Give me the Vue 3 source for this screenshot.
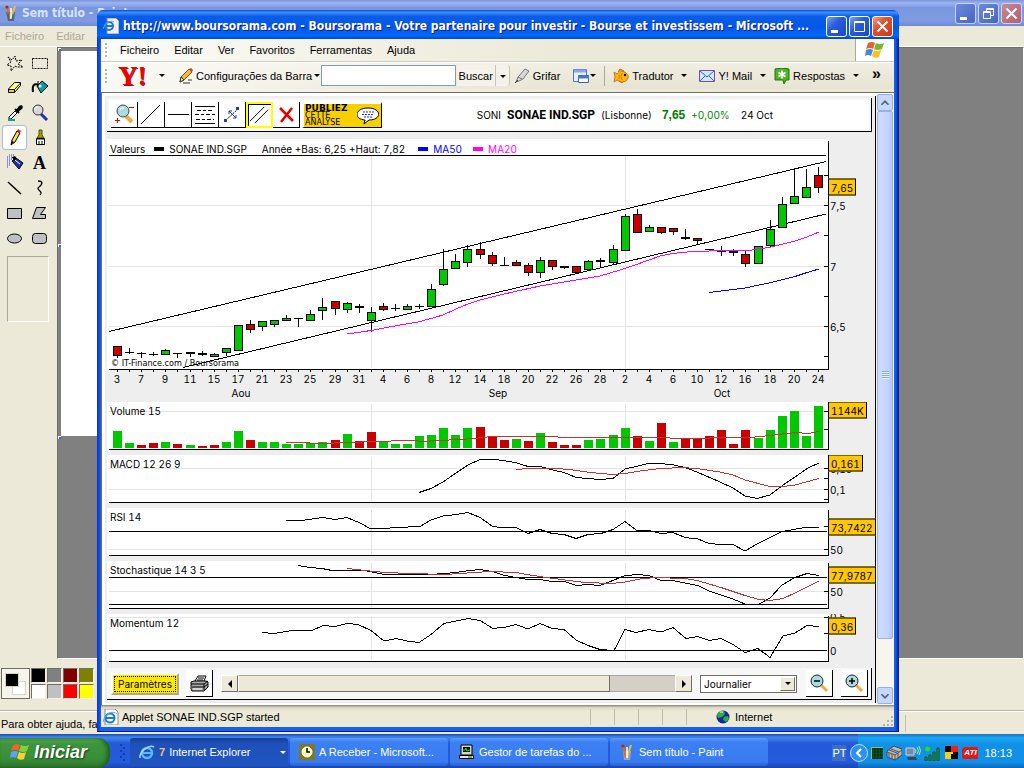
<script setup>
const firstX = 117
const step = 12.086
const plotLeft = 107
const plotWidth = 722
const xAt = (i) => Math.round(firstX + step * i)
const pct = (x) => ((x - plotLeft) / plotWidth) * 100 + '%'

const G = '#00c800'
const R = '#c80000'
const K = '#000000'

// high, body top, body bottom, low, colour
const candles = [
  [346, 346, 355, 357, R], [348, 352, 352, 353, K], [352, 353, 353, 357, K], [352, 354, 354, 355, K],
  [349, 350, 354, 354, G], [353, 353, 353, 357, K], [352, 352, 353, 356, K], [351, 353, 354, 355, K],
  [353, 354, 356, 356, G], [348, 348, 352, 355, G], [325, 325, 350, 350, G], [320, 324, 329, 332, R],
  [321, 321, 326, 330, G], [320, 320, 324, 326, G], [315, 318, 320, 320, G], [318, 318, 318, 326, K],
  [310, 314, 320, 320, G], [298, 307, 310, 319, G], [301, 301, 308, 314, R], [302, 303, 309, 312, G],
  [304, 306, 307, 312, K], [307, 312, 320, 331, G], [303, 306, 309, 310, R], [304, 308, 308, 310, K],
  [304, 306, 309, 309, G], [304, 306, 306, 308, K], [284, 289, 306, 306, G], [249, 269, 284, 285, G],
  [254, 261, 268, 268, G], [245, 249, 262, 266, G], [242, 249, 254, 258, R], [252, 255, 263, 265, R],
  [257, 265, 265, 265, K], [260, 262, 265, 265, R], [263, 265, 272, 275, R], [257, 260, 272, 277, G],
  [260, 260, 266, 269, R], [266, 266, 267, 268, K], [266, 266, 272, 272, R], [260, 261, 269, 269, G],
  [258, 260, 261, 266, K], [245, 249, 262, 264, G], [214, 216, 250, 250, G], [209, 214, 232, 232, R],
  [225, 227, 231, 231, G], [227, 227, 232, 233, R], [228, 228, 231, 234, R], [229, 237, 238, 239, K],
  [238, 238, 240, 244, R], [249, 249, 249, 249, K], [246, 250, 251, 255, K], [249, 251, 252, 255, K],
  [251, 254, 263, 266, R], [246, 246, 263, 263, G], [220, 229, 245, 246, G], [197, 204, 227, 227, G],
  [169, 196, 203, 203, G], [169, 187, 197, 197, G], [167, 175, 187, 192, R],
].map(([high, top, bottom, low, color], i) => ({ x: xAt(i), high, top, bottom, low, color }))

const volumeTops = [
  431, 443, 445, 443, 442, 444, 445, 446, 445, 442, 431, 440, 442, 442, 444, 444, 443, 442, 440, 434,
  441, 432, 441, 444, 444, 436, 435, 428, 435, 428, 427, 436, 440, 439, 441, 433, 442, 445, 445, 440,
  439, 435, 428, 436, 441, 423, 442, 438, 438, 436, 430, 444, 430, 438, 430, 416, 411, 436, 406,
]
const redVolumes = new Set([2, 3, 5, 7, 8, 11, 18, 20, 21, 30, 31, 32, 34, 36, 37, 38, 43, 45, 47, 48, 49, 50, 51, 52])
const volumes = volumeTops.map((y, i) => ({ x: xAt(i), y, color: redVolumes.has(i) ? R : G }))

const ma20 = '347,334 371,330.5 400,325 418,322 431,318.5 443,315 456,309 468,304 480,300 504,294 540,286 600,276 625,268.5 649,260 660,256 672,253.5 692,251.5 720,250.7 750,250.3 771,247 783,244 795,241 807,237 819,232'
const ma50 = '709,292.5 745,288 771,282.5 795,276.5 807,272.5 819,269'

const dates = [3, 7, 9, 11, 15, 17, 21, 23, 25, 29, 31, 4, 6, 8, 12, 14, 18, 20, 22, 26, 28, 2, 4, 6, 10, 12, 16, 18, 20, 24]
const months = [{ name: 'Aou', x: 241 }, { name: 'Sep', x: 498 }, { name: 'Oct', x: 722 }]

const panels = [
  {
    title: 'Volume 15', top: 402, grid: [411], solid: [], ticks: [411, 429],
    lines: [{ c: '#c83232', p: '286,442.5 304,442.5 316,443.5 353,442.5 371,441.5 412,440.5 424,441.5 437,440.5 461,439.5 484,437.5 490,436.5 556,436.5 560,437.5 640,437.5 700,438.5 720,437.5 750,437.5 770,435.5 795,432.5 808,433.5 819,431.5' }],
    labels: [], badge: '1144K', badgeY: 410,
  },
  {
    title: 'MACD 12 26 9', top: 455, grid: [468, 489], solid: [], ticks: [468, 478, 489, 499],
    lines: [
      { c: '#000', p: '419,492.5 431,488.5 443,482 456,473 468,465 480,459.5 495,459.5 506,461 517,463 528,466.5 540,466.5 553,470 564,472.5 576,477.5 588,478.5 600,479.5 613,478.5 625,469 638,466 648,463.5 660,463.5 674,465 685,467.5 697,472 720,482 733,488 745,496 757,498.5 770,495 783,485 795,477 808,468 819,463' },
      { c: '#c83232', p: '516,469.5 528,468.5 555,468.5 570,469.5 590,472.5 613,474.5 625,473.5 640,471 660,468.5 684,467.5 700,469 720,472 733,475 745,480 770,486.5 783,486.5 795,485 819,478.5' },
    ],
    labels: [{ t: '0,15', y: 469 }, { t: '0,1', y: 490 }], badge: '0,161', badgeY: 463,
  },
  {
    title: 'RSI 14', top: 508, grid: [549], solid: [531], ticks: [526, 549],
    lines: [{ c: '#000', p: '286,520.5 302,520.5 315,518.5 323,517.5 335,519.5 347,517.5 360,523 371,529 384,528.5 396,527.5 420,526.5 431,520 443,516 456,514.5 468,512.5 480,517.5 492,526 500,527.5 516,527.5 528,533.5 540,529.5 552,533.5 564,534.5 576,538.5 588,534.5 601,533.5 613,529.5 625,521.5 636,530 649,530.5 661,533.5 673,532.5 685,537.5 698,539 709,543.5 720,544.5 733,544.5 745,551 758,543.5 782,531.5 805,527.5 819,527.5' }],
    labels: [{ t: '50', y: 550 }], badge: '73,7422', badgeY: 527,
  },
  {
    title: 'Stochastique 14 3 5', top: 561, grid: [591], solid: [577, 604], ticks: [591],
    lines: [
      { c: '#000', p: '298,565.5 310,567.5 322,568.5 332,570.5 365,570.5 372,572 385,574.5 430,574.5 445,573.5 455,572.5 470,570.5 480,569.5 492,571.5 503,575 516,577.5 528,579.5 540,579.5 552,581.5 564,581.5 577,585.5 587,584.5 600,585.5 614,580 625,575.5 640,574.5 650,576 661,580.5 673,580.5 685,583 698,585.5 709,591 721,595 733,599 745,604 759,604 770,598 782,585 795,577.5 807,573.5 819,575.5' },
      { c: '#c83232', p: '347,568.5 365,570.5 385,572.5 410,573.5 445,574.5 460,573.5 475,572.5 490,571.5 516,572.5 530,575 550,578 565,580 585,582.5 612,583.5 625,582 640,579 655,577.5 685,578.5 697,580.5 721,587.5 745,595.5 759,599.5 770,600.5 783,598.5 795,593 819,581' },
    ],
    labels: [{ t: '50', y: 592 }], badge: '77,9787', badgeY: 575,
  },
  {
    title: 'Momentum 12', top: 614, grid: [617], solid: [650], ticks: [617, 633],
    lines: [{ c: '#000', p: '262,632.5 274,633.5 292,630.5 312,630.5 323,625.5 335,626.5 347,623.5 358,624.5 371,630.5 384,641 396,638.5 407,641 419,642.5 431,634.5 444,623.5 456,621 468,618.5 480,620.5 493,628.5 506,627 516,624.5 528,629 540,623.5 552,628.5 564,629.5 576,640 588,645.5 600,649.5 614,650.5 625,629.5 636,632.5 649,629.5 661,632 673,627.5 686,638.5 698,636.5 709,640.5 721,638.5 733,644.5 745,652.5 758,648.5 770,657.5 783,636 795,633 807,625.5 819,626.5' }],
    labels: [{ t: '0,5', y: 617 }, { t: '0', y: 651 }], badge: '0,36', badgeY: 626,
  },
]

const mainLabels = [{ t: '7,5', y: 206 }, { t: '7', y: 267 }, { t: '6,5', y: 327 }]
const mainTicks = [175, 205, 235, 266, 296, 326, 356]
const inMain = (y) => ((y - 139) / 231) * 100 + '%'
const inPanel = (y, top) => ((y - top) / 48) * 100 + '%'

const swatches = ['#000', '#808080', '#800000', '#808000', '#fff', '#c0c0c0', '#f00', '#ff0']
const menus = ['Ficheiro', 'Editar', 'Ver', 'Favoritos', 'Ferramentas', 'Ajuda']
</script>

<template>
  <div class="desktop">
    <section class="paint">
      <header class="paint-title">
        <svg class="i16" viewBox="0 0 16 16"><path d="M3 7h9l-1 9H5z" fill="#4a6aa0"/><path d="M4 2l3 12" stroke="#e86a10" stroke-width="2"/><path d="M12 1L8 13" stroke="#f0c030" stroke-width="2"/><path d="M8 3v11" stroke="#fff" stroke-width="1.5"/><path d="M5 8l1 7M10 9l-1 6" stroke="#208040"/><circle cx="4" cy="2" r="1.6" fill="#c02010"/></svg>
        <span>Sem título - Paint</span>
        <div class="win-btns dim">
          <button aria-label="Minimizar"><svg viewBox="0 0 19 19"><path d="M4 13h7v3H4z" fill="#fff"/></svg></button>
          <button aria-label="Restaurar"><svg viewBox="0 0 19 19"><path d="M7.500 7V4.500h7v7H12M4.500 7.500h7v7h-7z M4 8.500h8M7 5.500h8" fill="none" stroke="#fff"/></svg></button>
          <button class="x" aria-label="Fechar"><svg viewBox="0 0 19 19"><path d="M4.500 4.500l10 10M14.500 4.500l-10 10" stroke="#fff" stroke-width="2"/></svg></button>
        </div>
      </header>
      <nav class="paint-menu"><button>Ficheiro</button><button>Editar</button><button>Ver</button></nav>
      <div class="paint-body">
        <aside class="toolbox">
          <div class="tools">
            <button aria-label="Seleção livre"><svg viewBox="0 0 18 18"><path d="M2 3l4 3 3-4 1 5 6-1-4 4 5 3-6 0-2-1-4 5 0-5-4-1 4-3z" fill="none" stroke="#000" stroke-dasharray="2 1"/></svg></button>
            <button aria-label="Selecionar"><svg viewBox="0 0 18 18"><path d="M1.500 4.500h15v10h-15z" fill="none" stroke="#000" stroke-dasharray="2 1"/></svg></button>
            <button aria-label="Borracha"><svg viewBox="0 0 18 18"><path d="M2.500 10l6-6.500h6v3l-6 7h-6z" fill="#ffff90" stroke="#000"/><path d="M3 10.500h5.500l6-6.500M8.500 10.500v3" fill="none" stroke="#000"/><path d="M3 11h5v2H3z" fill="#e8d800"/></svg></button>
            <button aria-label="Preencher"><svg viewBox="0 0 18 18"><path d="M6 7l5-5 6 5-7 7z" fill="#00a0a8" stroke="#000"/><path d="M2 13c-1-7 1-9 6-7" stroke="#000" stroke-width="2" fill="none"/><path d="M7 2v6" stroke="#000"/><circle cx="9" cy="7" r="1.500" fill="#fff"/></svg></button>
            <button aria-label="Selecionar cor"><svg viewBox="0 0 18 18"><path d="M10 6l3-4c3-2 5 1 3 3l-4 3z"/><path d="M9 5l4 4" stroke="#000" stroke-width="2"/><path d="M9 7l-6 6v2h2l6-6z" fill="#fff" stroke="#000"/><path d="M2 16h7" stroke="#00a8a8" stroke-width="2"/></svg></button>
            <button aria-label="Lupa"><svg viewBox="0 0 18 18"><path d="M10 10l6 6" stroke="#2030c0" stroke-width="3"/><circle cx="7" cy="6" r="5" fill="#d8d8d8" stroke="#333"/><path d="M4 6c0-2 1-3 3-3" stroke="#fff" fill="none"/></svg></button>
            <button class="on" aria-label="Lápis"><svg viewBox="0 0 18 18"><path d="M5 16l1-5 5-9 3 2-5 9z" fill="#f4dc50" stroke="#000"/><path d="M11 2l3 2 1-2-3-2z" fill="#e02020"/><path d="M5 16l1-4 2 1z"/></svg></button>
            <button aria-label="Pincel"><svg viewBox="0 0 18 18"><path d="M8 1h3v5l2 3H6l2-3z" fill="#a0a000" stroke="#505000"/><path d="M5.500 9.500h8v6h-8z" fill="#fff" stroke="#000"/><path d="M8 12v4M11 12v4M6 10h7" stroke="#000"/></svg></button>
            <button aria-label="Spray"><svg viewBox="0 0 18 18"><path d="M3 1h5M1 3h6M1 5h5M1 7h4M1 9h3M1 11h3M1 13h2" stroke="#3030e0" stroke-dasharray="1 1"/><path d="M6 7l4-3 7 5-4 6z" fill="#2030b0" stroke="#000"/><path d="M6 3l3-1 2 3-3 2z"/><path d="M9 6l5 4" stroke="#fff"/></svg></button>
            <button class="a-tool" aria-label="Texto">A</button>
            <button aria-label="Linha"><svg viewBox="0 0 18 18"><path d="M2 3l13 12" stroke="#000" stroke-width="1.500"/></svg></button>
            <button aria-label="Curva"><svg viewBox="0 0 18 18"><path d="M7 2c5 0 5 3 1 6s5 4 1 8" fill="none" stroke="#000" stroke-width="1.300"/></svg></button>
            <button aria-label="Retângulo"><svg viewBox="0 0 18 18"><path d="M1.500 4.500h14v10h-14z" fill="#c0c0c0" stroke="#000"/></svg></button>
            <button aria-label="Polígono"><svg viewBox="0 0 18 18"><path d="M5.500 3.500h9l-5 7h5v4h-13z" fill="#c0c0c0" stroke="#000"/></svg></button>
            <button aria-label="Elipse"><svg viewBox="0 0 18 18"><ellipse cx="8.500" cy="9.500" rx="7" ry="4.500" fill="#c0c0c0" stroke="#000"/></svg></button>
            <button aria-label="Retângulo arredondado"><svg viewBox="0 0 18 18"><rect x="1.500" y="4.500" width="14" height="10" rx="3" fill="#c0c0c0" stroke="#000"/></svg></button>
          </div>
          <div class="tool-options"></div>
        </aside>
        <div class="canvas-area"><div class="canvas"><i></i><i></i><i></i></div></div>
      </div>
      <div class="palette">
        <div class="current"><i></i><b></b></div>
        <div class="swatches"><button v-for="c in swatches" :key="c" :style="{ background: c }" aria-label="Cor"></button></div>
      </div>
      <footer class="paint-status"><span>Para obter ajuda, faça clique</span><i></i></footer>
    </section>

    <main class="ie">
      <header class="ie-title">
        <svg class="i16" viewBox="0 0 16 16"><path d="M4 0h9l3 3v13H4z" fill="#f4f0e0" stroke="#888"/><circle cx="6" cy="8" r="4" fill="none" stroke="#1878d8" stroke-width="2"/><path d="M2 8h8" stroke="#1878d8" stroke-width="2"/><path d="M0 11C2 4 8 2 11 4" fill="none" stroke="#50b0f0"/></svg>
        <span>http://www.boursorama.com - Boursorama - Votre partenaire pour investir - Bourse et investissem - Microsoft ...</span>
        <div class="win-btns">
          <button aria-label="Minimizar"><svg viewBox="0 0 19 19"><path d="M4 13h7v3H4z" fill="#fff"/></svg></button>
          <button aria-label="Maximizar"><svg viewBox="0 0 19 19"><path d="M4.500 4.500h10v10h-10zM4 5.500h11" fill="none" stroke="#fff"/></svg></button>
          <button class="x" aria-label="Fechar"><svg viewBox="0 0 19 19"><path d="M4.500 4.500l10 10M14.500 4.500l-10 10" stroke="#fff" stroke-width="2"/></svg></button>
        </div>
      </header>

      <nav class="ie-menu">
        <i class="grip"></i>
        <button v-for="m in menus" :key="m">{{ m }}</button>
        <span class="flag"><svg width="20" height="18" viewBox="0 0 20 18"><path d="M3 2q4-2 7 0l-2 6q-3-2-7 0z" fill="#e8602c"/><path d="M11 2q4 2 8 0l-2 6q-4 2-8 0z" fill="#78b830"/><path d="M1 9q4-2 7 0l-2 6q-3-2-6 0z" fill="#4888d8"/><path d="M9 9q4 2 7 0l-2 7q-4 2-7-1z" fill="#f8c020"/></svg></span>
      </nav>

      <div class="ie-tools">
        <i class="grip"></i>
        <button class="yahoo">Y!</button><i class="caret y-caret"></i>
        <button class="tb cfg"><svg class="i16" viewBox="0 0 16 16"><path d="M2 14l1-5 8-8 3 3-8 8z" fill="#f8b830" stroke="#805010"/><path d="M11 1l3 3 1-2-2-2z" fill="#e04030"/><path d="M3 9l3 3-4 2z" fill="#f8e0b0" stroke="#333"/><path d="M5 15h7M10 12h4" stroke="#333"/></svg>Configurações da Barra<i class="caret"></i></button>
        <input class="search" type="text" aria-label="Buscar">
        <button class="buscar">Buscar</button><button class="buscar drop" aria-label="Opções"><i class="caret"></i></button>
        <button class="tb grifar"><svg class="i16" viewBox="0 0 16 16"><path d="M2 14l2-5 7-8 4 2-6 8-4 2z" fill="#d8d8d8" stroke="#777"/><path d="M4 9l4 2" stroke="#777"/><path d="M1 15l3-3" stroke="#333"/></svg>Grifar</button>
        <button class="tb wins" aria-label="Janelas"><svg class="i16" viewBox="0 0 16 16"><path d="M.5 1.500h13v12H.5z" fill="#e8f0ff" stroke="#4878c8"/><path d="M1 3h12" stroke="#88a8e8" stroke-width="3"/><path d="M5.500 7.500h10v7h-10z" fill="#fff" stroke="#3868b8"/><path d="M5 9h11" stroke="#4878c8" stroke-width="3"/></svg><i class="caret"></i></button>
        <i class="rule"></i>
        <button class="tb trad"><svg class="i16" viewBox="0 0 16 16"><path d="M1 4l3 2q5-5 9-1 4 3 1 7-4 4-10 0l-3 2 1-5z" fill="#f8b818" stroke="#d07808"/><path d="M5 4l2-3 4 2M6 13l3 2 2-2" fill="#f89818" stroke="#c87008"/><path d="M9 5q-2 4 0 7M6 7v4" stroke="#d87808" fill="none"/><circle cx="12" cy="7" r="1.200"/></svg>Tradutor<i class="caret far"></i></button>
        <button class="tb mail"><svg class="i16" viewBox="0 0 16 16"><path d="M.5 2.500h15v11H.5z" fill="#d0e8ff" stroke="#7050a8"/><path d="M1 3l7 6 7-6M1 13l5-5M15 13l-5-5" fill="none" stroke="#3868b8"/></svg>Y! Mail<i class="caret far"></i></button>
        <button class="tb resp"><svg class="i16" viewBox="0 0 16 16"><path d="M1 1q7-2 14 0v11h-3l-2 4-1-4H1z" fill="#48b820" stroke="#287010"/><path d="M8 2.500v8M4.500 4.500l7 4M11.500 4.500l-7 4" stroke="#fff" stroke-width="2"/></svg>Respostas<i class="caret far"></i></button>
        <b class="more">»</b>
      </div>

      <div class="page">
        <div class="applet">
          <div class="frame top-frame">
            <div class="chart-tools">
              <button aria-label="Zoom"><svg viewBox="0 0 26 25"><path d="M15 14l6 6" stroke="#f8a840" stroke-width="4"/><circle cx="12" cy="9" r="6" fill="#a8dce0" stroke="#444"/><path d="M9 8q1-3 4-2" stroke="#fff" fill="none"/><path d="M18 5.500h5M4 18.500h5M6.500 16v5" stroke="#e00000"/></svg></button>
              <button aria-label="Segmento"><svg viewBox="0 0 26 25"><path d="M3 22L22 3" stroke="#000"/></svg></button>
              <button aria-label="Horizontal"><svg viewBox="0 0 26 25"><path d="M3 12.500h21" stroke="#000"/></svg></button>
              <button aria-label="Fibonacci"><svg viewBox="0 0 26 25"><path d="M3 4.500h20M3 21.500h20" stroke="#000"/><path d="M5 8.500h16M3 12.500h20M4 17.500h18" stroke="#000" stroke-dasharray="4 2 3 2"/></svg></button>
              <button aria-label="Deslocar"><svg viewBox="0 0 26 25"><path d="M7 18L19 7" stroke="#000" stroke-dasharray="2 1"/><path d="M10 9l7 7M10 9h3M10 9v3M17 16h-3M17 16v-3" fill="none" stroke="#1838d0"/><path d="M5 17h3v3H5zM17 5h3v3h-3z" fill="#1838d0"/></svg></button>
              <button class="sel" aria-label="Canal"><svg viewBox="0 0 26 25"><path d="M3 19L18 4M8 21L22 7" stroke="#000"/></svg></button>
              <button aria-label="Apagar"><svg viewBox="0 0 26 25"><path d="M7 6l13 13M19 6L8 20" stroke="#e00000" stroke-width="2.500"/></svg></button>
              <button class="publish"><span><b>PUBLIEZ</b><br>CETTE<br>ANALYSE</span><svg viewBox="0 0 22 18"><path d="M11 1c14 0 14 12 1 12l-5 4 1-4c-12-1-10-12 3-12z" fill="#fff" stroke="#000"/><path d="M6 5h11M5 7.500h12M7 10h9" stroke="#2828d0" stroke-dasharray="2 1"/></svg></button>
            </div>
            <p class="quote"><span>SONI</span><b class="name">SONAE IND.SGP</b><span>(Lisbonne)</span><b class="price">7,65</b><span class="chg">+0,00%</span><span class="day">24 Oct</span></p>
          </div>

          <div class="row main-row">
            <div class="plot">
              <svg viewBox="107 139 722 231" preserveAspectRatio="none" shape-rendering="crispEdges">
                <path d="M109 205.500h715M109 266.500h715M109 326.500h715M371.500 156v212M625.500 156v212" stroke="#e4e4e4"/>
                <polyline points="109,331.500 826,161.500" class="ln"/><polyline points="183,367.500 826,214" class="ln"/>
                <g v-for="(c, i) in candles" :key="i">
                  <rect :x="c.x" :y="c.high" width="1" :height="c.low - c.high + 1"/>
                  <rect :x="c.x - 4" :y="c.top" width="9" :height="c.bottom - c.top + 1"/>
                  <rect v-if="c.color !== K" :x="c.x - 3" :y="c.top + 1" width="7" :height="c.bottom - c.top - 1" :fill="c.color"/>
                </g>
                <polyline :points="ma20" fill="none" stroke="#f0f"/><polyline :points="ma50" fill="none" stroke="#00f"/>
                <path d="M109 155.500h717M109 369.500h720M828.500 141v229" stroke="#000"/>
                <path v-for="y in mainTicks" :key="y" :d="`M824 ${y + 0.5}h4`" stroke="#000"/>
              </svg>
              <div class="legend"><span class="lg-title">Valeurs</span><i class="k"></i><span class="lg-name">SONAE IND.SGP</span><span class="lg-year">Année +Bas: 6,25 +Haut: 7,82</span><i class="b"></i><span class="blue">MA50</span><i class="m"></i><span class="mag">MA20</span></div>
              <div class="copyright">© IT-Finance.com / Boursorama</div>
            </div>
            <div class="axis">
              <span v-for="l in mainLabels" :key="l.t" :style="{ top: inMain(l.y) }">{{ l.t }}</span>
              <b :style="{ top: inMain(187) }">7,65</b>
            </div>
          </div>

          <div class="dates">
            <div class="dates-in">
              <i v-for="(c, i) in candles" :key="'t' + i" :style="{ left: pct(c.x) }"></i>
              <span v-for="(d, i) in dates" :key="'d' + i" :style="{ left: pct(xAt(i * 2)) }">{{ d }}</span>
              <span v-for="m in months" :key="m.name" class="month" :style="{ left: pct(m.x) }">{{ m.name }}</span>
            </div>
          </div>

          <div class="indicators">
            <div v-for="(p, n) in panels" :key="p.title" class="row">
              <div class="plot">
                <svg :viewBox="`107 ${p.top} 722 48`" preserveAspectRatio="none" shape-rendering="crispEdges">
                  <path v-for="y in p.grid" :key="y" :d="`M109 ${y + 0.5}h715`" stroke="#e4e4e4"/>
                  <path :d="`M371.500 ${p.top + 2}v44M625.500 ${p.top + 2}v44`" stroke="#e4e4e4"/>
                  <path v-for="y in p.solid" :key="y" :d="`M109 ${y + 0.5}h718`" stroke="#000"/>
                  <g v-if="n === 0"><rect v-for="(v, i) in volumes" :key="i" :x="v.x - 4" :y="v.y" width="9" :height="448 - v.y" :fill="v.color"/></g>
                  <polyline v-for="l in p.lines" :key="l.p" :points="l.p" fill="none" :stroke="l.c"/>
                  <path v-for="y in p.ticks" :key="y" :d="`M824 ${y + 0.5}h4`" stroke="#000"/>
                  <path :d="`M109 ${p.top + 47.5}h720M828.500 ${p.top + 2}v46`" stroke="#000"/>
                </svg>
                <h2>{{ p.title }}</h2>
              </div>
              <div class="axis clip">
                <span v-for="l in p.labels" :key="l.t" :style="{ top: inPanel(l.y, p.top) }">{{ l.t }}</span>
                <b :style="{ top: inPanel(p.badgeY, p.top) }">{{ p.badge }}</b>
              </div>
            </div>
          </div>

          <div class="frame bottom-frame">
            <button class="params">Paramètres</button>
            <button class="sq" aria-label="Imprimir"><svg viewBox="0 0 26 26"><path d="M9 11l3-5h8l-2 5" fill="#fff" stroke="#000"/><path d="M12 8h6M11 10h6" stroke="#000"/><path d="M5 12l3-1h12l2 1v5l-4 4H6l-1-2z" fill="#a8a8a8" stroke="#000"/><path d="M5 14h13l4-3M6 17h12l4-3M18 14v6" fill="none" stroke="#000"/><path d="M7 19h9" stroke="#fff"/></svg></button>
            <div class="hbar"><button aria-label="Anterior"><svg viewBox="0 0 8 8"><path d="M6 0v8L2 4z"/></svg></button><div class="thumb"></div><div class="track"></div><button aria-label="Seguinte"><svg viewBox="0 0 8 8"><path d="M2 0v8l4-4z"/></svg></button></div>
            <div class="picker"><select aria-label="Período"><option>Journalier</option></select><i><em class="caret"></em></i></div>
            <button class="sq" aria-label="Reduzir"><svg viewBox="0 0 26 26"><path d="M14 14l7 7" stroke="#f8a840" stroke-width="3"/><circle cx="11" cy="11" r="6" fill="#a8dce0" stroke="#222"/><path d="M8 11h6" stroke="#000" stroke-width="1.500"/></svg></button>
            <button class="sq" aria-label="Ampliar"><svg viewBox="0 0 26 26"><path d="M14 14l7 7" stroke="#f8a840" stroke-width="3"/><circle cx="11" cy="11" r="6" fill="#a8dce0" stroke="#222"/><path d="M8 11h6M11 8v6" stroke="#000" stroke-width="1.500"/></svg></button>
          </div>
        </div>
        <div class="vbar">
          <button aria-label="Subir"><svg viewBox="0 0 16 16"><path d="M4 10l4-4 4 4" fill="none" stroke="#4d6185" stroke-width="2"/></svg></button>
          <div class="vthumb"><i></i></div>
          <div class="vtrack"></div>
          <button aria-label="Descer"><svg viewBox="0 0 16 16"><path d="M4 6l4 4 4-4" fill="none" stroke="#4d6185" stroke-width="2"/></svg></button>
        </div>
      </div>

      <footer class="ie-status">
        <svg class="i16" viewBox="0 0 16 16"><path d="M2 0h10l3 3v13H2z" fill="#fff" stroke="#888"/><circle cx="7" cy="9" r="4.500" fill="none" stroke="#1878d8" stroke-width="2"/><path d="M3 9h9" stroke="#1878d8" stroke-width="2"/><path d="M0 13C2 4 10 1 14 5" fill="none" stroke="#50b0f0"/></svg>
        <span class="msg">Applet SONAE IND.SGP started</span>
        <i></i><i></i><i></i><i></i><i></i>
        <div class="zone"><svg viewBox="0 0 14 14"><circle cx="7" cy="7" r="6.500" fill="#1028a8"/><path d="M3 2l5-1 1 3-3 3-4 1-1-3zM8 7l4-1 1 3-3 3-3-2z" fill="#30b030"/><path d="M4 2l3 0" stroke="#fff"/></svg>Internet</div>
        <svg class="resize" viewBox="0 0 12 12"><path d="M9 1h2v2H9zM5 5h2v2H5zM9 5h2v2H9zM1 9h2v2H1zM5 9h2v2H5zM9 9h2v2H9z" fill="#b8b4a0"/></svg>
      </footer>
    </main>

    <footer class="taskbar">
      <button class="start"><svg viewBox="0 0 20 18"><path d="M3 2q4-2 7 0l-2 6q-3-2-7 0z" fill="#f06030"/><path d="M11 2q4 2 8 0l-2 6q-4 2-8 0z" fill="#80d040"/><path d="M1 9q4-2 7 0l-2 6q-3-2-6 0z" fill="#60a0f8"/><path d="M9 9q4 2 7 0l-2 7q-4 2-7-1z" fill="#f8d030"/></svg>Iniciar</button>
      <svg class="dots" viewBox="0 0 8 20"><path d="M1 1h2v2H1zM4 4h2v2H4zM1 7h2v2H1zM4 10h2v2H4zM1 13h2v2H1zM4 16h2v2H4z" fill="#123ea8"/></svg>
      <div class="tasks">
        <button class="down"><svg viewBox="0 0 16 16"><circle cx="8" cy="9" r="5" fill="none" stroke="#58b8f8" stroke-width="2.500"/><path d="M3 9h10" stroke="#58b8f8" stroke-width="2"/><path d="M1 14C0 8 10 0 15 3" fill="none" stroke="#a0d8ff" stroke-width="1.500"/></svg><b>7</b><span>Internet Explorer</span><i class="caret w"></i></button>
        <button><svg viewBox="0 0 16 16"><path d="M0 0h16v16H0z" fill="#807820"/><circle cx="8" cy="8" r="5" fill="#fff8c0" stroke="#fff"/><path d="M8 4v4h3" fill="none" stroke="#000" stroke-width="1.500"/></svg><span>A Receber - Microsoft...</span></button>
        <button><svg viewBox="0 0 16 16"><path d="M2 1h11v10H2z" fill="#d8d4c8" stroke="#000"/><path d="M4 3h7v5H4z"/><path d="M4 6l2 0 1-2 1 3 3-1" stroke="#0f0" fill="none"/><path d="M.5 11.500h14v3H.5z" fill="#e8e4d8" stroke="#000"/><path d="M9 13h4" stroke="#080"/></svg><span>Gestor de tarefas do ...</span></button>
        <button><svg viewBox="0 0 16 16"><path d="M4 7h8l-1 9H5z" fill="#88a8d0"/><path d="M4 2l3 12" stroke="#e86a10" stroke-width="2"/><path d="M12 1L8 13" stroke="#f0c030" stroke-width="2"/><path d="M8 3v11" stroke="#fff" stroke-width="1.500"/><circle cx="4" cy="2" r="1.600" fill="#c02010"/></svg><span>Sem título - Paint</span></button>
      </div>
      <span class="lang">PT</span>
      <div class="tray">
        <button class="chev" aria-label="Mostrar ícones"><svg viewBox="0 0 18 18"><circle cx="9" cy="9" r="8.500" fill="#3090f0" stroke="#b8e0ff"/><path d="M11 5L7 9l4 4" fill="none" stroke="#fff" stroke-width="2"/></svg></button>
        <svg class="t12" viewBox="0 0 12 12"><path d="M0 0h12v12H0z" fill="#063"/><path d="M1 1v11M4 1v11M7 1v11M10 1v11M0 2h12M0 5h12M0 8h12M0 11h12" stroke="#082808"/><path d="M0 .5h12M.5 0v12" stroke="#80c080"/></svg>
        <svg class="i16" viewBox="0 0 16 16"><path d="M1 6l7-5 8 3v6l-7 5-8-3z" fill="#b8b8b8" stroke="#444"/><path d="M1 7l8 3 7-5M3 8v5M6 9v5M9 10v5M12 8v5M3 5l8 3M5 4l8 3" fill="none" stroke="#555"/></svg>
        <svg class="i16" viewBox="0 0 16 16"><path d="M1 3h8v7H1z" fill="#7888a8" stroke="#c8d0e0"/><path d="M2 12h9l1 3H3z" fill="#444"/><path d="M10 4q2 2 0 4M12 2q3 4 0 7M14 1q3 5 0 9" fill="none" stroke="#b0f080"/></svg>
        <svg class="i16" viewBox="0 0 16 16"><path d="M1 12h2v4H1zM5 10h2v6H5zM9 7h2v9H9zM13 3h2v13h-2z" fill="#30a040" stroke="#0a5018"/><circle cx="3.500" cy="4" r="2.500" fill="#20e020"/></svg>
        <svg class="i16" viewBox="0 0 16 16"><path d="M2 1h6v6H2z"/><path d="M8 1h7v6H8z" fill="#f02010"/><path d="M2 7h6v7H2z" fill="#f8d010"/><path d="M8 7h7v7H8z"/><path d="M8 7h2v2H8z" fill="#f8d010"/></svg>
        <span class="ati">ATI</span>
        <time>18:13</time>
      </div>
    </footer>
  </div>
</template>

<style>
html, body { margin: 0; }
#app { height: 100vh; }
</style>

<style scoped>
.desktop { position: relative; height: 100%; min-height: 640px; display: flex; flex-direction: column; overflow: hidden; background: #ece9d8; font: 11px/14px "Liberation Sans", sans-serif; color: #000; }
.desktop * { box-sizing: border-box; }
button { font: inherit; color: inherit; padding: 0; margin: 0; border: 0; background: none; white-space: nowrap; }
svg { display: block; }
i { font-style: normal; }
.i16 { width: 16px; height: 16px; flex: none; }
.caret { display: inline-block; border: 3px solid transparent; border-top-color: #000; border-bottom: 0; flex: none; }
.caret.w { border-top-color: #fff; }

/* Paint */
.paint { flex: 1; min-height: 0; display: flex; flex-direction: column; }
.paint-title { height: 26px; display: flex; align-items: center; gap: 3px; padding: 0 2px 0 3px; background: linear-gradient(#7a94dc, #9cb4ec 12%, #7a96df 30%, #7f9be4 80%, #6f8ad6); color: #d8e4f8; font: bold 12px/16px "DejaVu Sans Condensed", sans-serif; }
.paint-title .win-btns { margin-left: auto; }
.win-btns { display: flex; gap: 2px; flex: none; }
.win-btns button { width: 21px; height: 21px; border: 1px solid #fff; border-radius: 3px; background: linear-gradient(135deg, #7aa0f4, #2a5cdc 40%, #1a48cc); }
.win-btns .x { background: linear-gradient(135deg, #f0a088, #e05030 40%, #c83c18); }
.win-btns.dim button { border-color: #c8d4f4; background: linear-gradient(135deg, #7088d8, #4466c8); }
.win-btns.dim .x { background: linear-gradient(135deg, #c88898, #b06070); }
.paint-menu { height: 19px; display: flex; gap: 12px; align-items: center; padding-left: 5px; color: #aca899; }
.paint-body { flex: 1; display: flex; min-height: 0; border-top: 1px solid #fff; margin-top: 1px; }
.toolbox { width: 57px; background: #ece9d8; padding: 3px 2px; }
.tools { display: grid; grid-template-columns: 25px 25px; }
.tools button { height: 25px; display: flex; align-items: center; justify-content: center; border-radius: 3px; border: 1px solid transparent; }
.tools svg { width: 18px; height: 18px; }
.tools .on { background: #fff; border-color: #a8bcd8; }
.tools .a-tool { font: bold 18px/18px "Liberation Serif", serif; }
.tool-options { width: 42px; height: 66px; margin: 6px 0 0 5px; border: 1px solid #aca899; border-right-color: #fff; border-bottom-color: #fff; }
.canvas-area { flex: 1; background: #808080; border: 1px solid #716f64; border-right-color: #fff; border-bottom-color: #fff; padding: 3px; }
.canvas { position: relative; width: 640px; height: 385px; background: #fff; }
.canvas i { position: absolute; left: -3px; width: 3px; height: 3px; background: #316ac5; border: solid #fff; border-width: 1px 0 0 1px; }
.canvas i:nth-child(1) { top: -3px; }
.canvas i:nth-child(2) { top: 50%; }
.canvas i:nth-child(3) { top: 100%; }
.palette { height: 51px; display: flex; padding: 9px 0 0 1px; align-items: flex-start; }
.current { width: 29px; height: 31px; position: relative; border: 1px solid #716f64; background: #f6f4ec; margin-right: 1px; }
.current i, .current b { position: absolute; width: 14px; height: 14px; border: 1px solid #d8d4c4; }
.current i { left: 3px; top: 4px; background: #000; z-index: 1; }
.current b { right: 3px; bottom: 3px; background: #fff; }
.swatches { display: grid; grid-template-columns: repeat(4, 16px); }
.swatches button { width: 15px; height: 15px; margin-bottom: 1px; border: 1px solid #716f64; border-right-color: #f4f2e8; border-bottom-color: #f4f2e8; }
.paint-status { height: 23px; border-top: 1px solid #b8b4a4; display: flex; align-items: center; padding: 3px 0 0 1px; box-shadow: inset 0 1px #fff; }
.paint-status i { margin-left: auto; width: 119px; height: 17px; border-left: 1px solid #c4c0b0; }

/* Browser window */
.ie { position: absolute; left: 97px; right: 125px; top: 10px; bottom: 36px; display: flex; flex-direction: column; padding: 0 5px 4px 4px; background: linear-gradient(90deg, #0831d9, #1660f0 4px, #1660f0 calc(100% - 4px), #0019a0); border-bottom: 1px solid #001a90; border-radius: 7px 7px 0 0; }
.ie-title { height: 29px; flex: none; margin: 0 -5px 0 -4px; padding: 3px 6px 0 6px; border-radius: 7px 7px 0 0; display: flex; align-items: center; background: linear-gradient(#0a4ad8, #3c90fc 8%, #0a5ce8 22%, #0058e8 60%, #0468fc 88%, #0148c8); color: #fff; font: bold 12px/16px "DejaVu Sans Condensed", sans-serif; text-shadow: 1px 1px #0a1883; }
.ie-title span { flex: 1; min-width: 0; margin-left: 4px; white-space: nowrap; overflow: hidden; }
.ie-menu { height: 23px; flex: none; display: flex; align-items: center; gap: 15px; background: linear-gradient(90deg, #fbfbf8, #ece9d8 60%); border-bottom: 1px solid #d0ccbc; }
.grip { width: 2px; height: 14px; margin: 0 -2px 0 4px; flex: none; background: repeating-linear-gradient(#b8b4a4 0 2px, transparent 2px 4px); }
.flag { margin-left: auto; width: 39px; height: 22px; background: #fff; border-left: 1px solid #aca899; display: flex; align-items: center; justify-content: center; }
.ie-tools { height: 30px; flex: none; display: flex; align-items: center; padding-bottom: 4px; border-top: 1px solid #fff; background: linear-gradient(90deg, rgba(251, 251, 248, .9), rgba(240, 237, 224, 0) 60%), linear-gradient(#f0eee2, #e8e4d2 88%, #c8c4b0 89%, #ece9d8 91%); white-space: nowrap; }
.yahoo { margin-left: 13px; width: 32px; text-align: left; color: #f00000; font: bold 27px/24px "Liberation Serif", serif; text-shadow: 1px 1px #902020; }
.y-caret { margin-left: 9px; }
.tb { display: flex; align-items: center; gap: 3px; }
.tb .caret.far { margin-left: 5px; }
.cfg { margin-left: 13px; gap: 2px; }
.search { flex: 1; min-width: 40px; margin: 0 1px; height: 21px; border: 1px solid #7f9db9; background: #fff; padding: 0 3px; font: inherit; }
.buscar { height: 21px; padding: 0 2px; background: #f4f2ea; border-right: 1px solid #c8c4b4; }
.buscar.drop { width: 14px; padding: 0 0 3px 1px; border-radius: 0 3px 3px 0; }
.grifar { margin-left: 4px; }
.wins { margin-left: 13px; gap: 1px; }
.rule { width: 1px; height: 20px; background: #aca899; margin: 0 8px; }
.mail { margin-left: 12px; }
.resp { margin-left: 8px; }
.more { margin: 0 13px 3px 13px; font: bold 16px/16px "Liberation Sans", sans-serif; }

.page { flex: 1; min-height: 0; display: flex; background: #fff; border-top: 1px solid #716f64; border-left: 1px solid #716f64; }
.applet { flex: 1; min-width: 0; display: flex; flex-direction: column; margin: 3px 0 2px 3px; padding-bottom: 3px; background: #eee; border-right: 1px solid #000; font: 10px/12px Inter, "Liberation Sans", sans-serif; font-variant-numeric: tabular-nums; }
.frame { flex: none; display: flex; background: #f7f7f7; border-right: 1px solid #000; border-bottom: 1px solid #000; margin: 0 3px 0 2px; }
.top-frame { height: 34px; margin-top: 2px; margin-bottom: 7px; padding: 3px 2px 2px; align-items: center; justify-content: space-between; background: #fff; box-shadow: inset 2px 2px #f7f7f7, inset -2px -2px #f7f7f7; }
.chart-tools { display: flex; padding-left: 2px; }
.chart-tools button { width: 27px; height: 26px; background: #fff; border-right: 1px solid #000; border-bottom: 1px solid #000; }
.chart-tools .sel { border: 1px solid #ff0; outline: 1px solid #ff0; outline-offset: -2px; box-shadow: inset 2px 2px #000; }
.chart-tools .publish { width: 80px; margin-left: 2px; padding: 0 2px 0 1px; display: flex; justify-content: space-between; align-items: center; background: #f8d000; border-top: 2px solid #fff; border-left: 2px solid #fff; text-align: left; font: 8px/7px "DejaVu Sans", sans-serif; }
.publish b { font-size: 9px; }
.publish svg { width: 22px; height: 18px; flex: none; }
.quote { margin: 0 96px 0 0; display: flex; align-items: center; white-space: nowrap; gap: 6px; }
.quote .name { font: bold 12px/14px Roboto, sans-serif; }
.quote .price { color: #008000; font: bold 12px/14px "Liberation Sans", sans-serif; margin-left: 4px; }
.quote .chg { color: #008000; }
.quote .day { margin-left: 5px; }

.row { display: flex; padding-left: 2px; }
.main-row { flex: 1; min-height: 120px; }
.plot { flex: 1; min-width: 0; position: relative; background: #fff; }
.plot svg { position: absolute; inset: 0; width: 100%; height: 100%; }
.ln { fill: none; stroke: #000; }
.legend { position: absolute; left: 3px; top: 4px; display: flex; align-items: center; white-space: nowrap; }
.legend i { width: 10px; height: 4px; margin-right: 5px; }
.lg-title { margin-right: 9px; }
.lg-name { margin-right: 15px; }
.lg-year { margin-right: 13px; }
.k { background: #000; } .b { background: #00f; } .m { background: #f0f; }
.blue { color: #00f; margin-right: 11px; } .mag { color: #f0f; }
.copyright { position: absolute; left: 4px; bottom: 1px; font: 9px/12px "DejaVu Sans Condensed", sans-serif; }
.axis { position: relative; width: 46px; flex: none; }
.axis span, .axis b { position: absolute; transform: translateY(-50%); font-weight: normal; white-space: nowrap; }
.axis span { left: 1px; }
.axis b { left: -1px; padding: 1px 2px; height: 17px; line-height: 14px; border: 1px solid #000; background: #ffc800; }
.axis.clip { clip-path: inset(0 -1px 0 -1px); }
.dates { flex: none; height: 32px; padding: 0 46px 0 2px; }
.dates-in { position: relative; height: 100%; }
.dates i { position: absolute; top: 0; width: 1px; height: 2px; background: #000; }
.dates span { position: absolute; top: 3px; transform: translateX(-50%); }
.dates .month { top: 17px; }
.indicators { flex: none; display: flex; flex-direction: column; gap: 5px; }
.indicators .row { height: 48px; }
.plot h2 { position: absolute; left: 3px; top: 3px; margin: 0; font: inherit; }

.bottom-frame { height: 32px; margin-top: 6px; padding: 0 3px 0 4px; align-items: center; }
.params { height: 22px; width: 68px; background: #ffe800; border: 2px solid #aca899; border-top-color: #fff; border-left-color: #fff; outline: 1px dotted #000; outline-offset: -4px; }
.sq { width: 27px; height: 27px; flex: none; background: #fff; border-right: 1px solid #000; border-bottom: 1px solid #000; }
.params + .sq { margin-left: 7px; }
.hbar { flex: 1; display: flex; height: 17px; margin-left: 8px; min-width: 0; }
.hbar button { width: 17px; flex: none; background: #ece9d8; border: 1px solid #716f64; border-top-color: #fff; border-left-color: #fff; }
.hbar svg { width: 8px; height: 8px; margin: auto; }
.hbar .thumb { flex: 85; background: #ece9d8; border: 1px solid #716f64; border-top-color: #aca899; border-left-color: #fff; }
.hbar .track { flex: 15; background: #d4d0c8; border-top: 1px solid #aca899; border-bottom: 1px solid #aca899; }
.picker { position: relative; margin: 0 9px 0 8px; width: 97px; height: 18px; }
.picker select { width: 100%; height: 100%; appearance: none; border: 1px solid #716f64; border-radius: 0; background: #fff; font: inherit; padding: 0 3px; color: #000; }
.picker i { position: absolute; right: 2px; top: 2px; width: 15px; height: 14px; background: #ece9d8; border: 1px solid #716f64; border-top-color: #fff; border-left-color: #fff; display: flex; align-items: center; justify-content: center; pointer-events: none; }
.sq + .sq { margin-left: 8px; }
.vbar { width: 18px; flex: none; display: flex; flex-direction: column; padding: 1px; background: #f6f5ee; }
.vbar button { height: 17px; flex: none; border-radius: 2px; border: 1px solid #98b0e0; background: #c8d8fc; }
.vthumb { flex: 526; background: linear-gradient(90deg, #d0dcfe, #c2d4fc 70%, #b4c8f4); border: 1px solid #98b0e8; border-radius: 2px; display: flex; align-items: center; justify-content: center; }
.vthumb i { width: 7px; height: 8px; background: repeating-linear-gradient(#8ca8e8 0 1px, #e8f0ff 1px 2px); }
.vtrack { flex: 48; }

.ie-status { flex: none; height: 22px; display: flex; align-items: center; padding: 2px 0 0 2px; background: linear-gradient(#989480 1px, #d8d4c4 2px, #ece9d8 6px); }
.ie-status .msg { flex: 1; margin-left: 3px; }
.ie-status i { width: 24px; height: 16px; border-left: 1px solid #c0bcac; flex: none; }
.zone { width: 166px; display: flex; align-items: center; gap: 5px; margin-left: 6px; }
.zone svg { width: 14px; height: 14px; }
.resize { width: 12px; height: 12px; align-self: flex-end; }

/* Taskbar */
.taskbar { flex: none; height: 34px; margin-top: 1px; display: flex; align-items: stretch; background: linear-gradient(#1d46a8, #3c84f0 3px, #3878e8 6px, #2459d8 9px, #245adc 28px, #1b45a8); color: #fff; z-index: 1; }
.start { width: 110px; margin-top: 4px; display: flex; align-items: center; padding: 0 0 2px 10px; gap: 4px; border-radius: 0 12px 12px 0; background: linear-gradient(#58a858, #3c963c 20%, #388e38 70%, #2c742c); box-shadow: inset -3px 0 4px #205c20; font: italic bold 18px/22px "Liberation Sans", sans-serif; text-shadow: 1px 1px 2px #1a3a1a; }
.start svg { width: 20px; height: 18px; }
.dots { width: 8px; height: 20px; margin: 9px 3px 0 9px; }
.tasks { flex: 1; display: flex; gap: 2px; margin: 4px 0 2px; min-width: 0; }
.tasks button { flex: 0 1 158px; min-width: 0; display: flex; align-items: center; gap: 4px; padding: 0 9px; border-radius: 3px; background: linear-gradient(#5c9cfc, #3c80f4 15%, #3a7cf0 85%, #2860d0); overflow: hidden; }
.tasks .down { background: linear-gradient(#163f98, #1e50b8 20%, #2055c0); padding: 0 2px 0 9px; }
.tasks .down b { color: #f8c068; }
.tasks .down .caret { margin-left: auto; }
.tasks svg { width: 16px; height: 16px; flex: none; }
.lang { align-self: center; width: 14px; height: 16px; margin: 4px 12px 0 0; line-height: 16px; background: #3a70c8; }
.tray { display: flex; align-items: center; gap: 3px; padding: 4px 12px 0 0; background: linear-gradient(#1d70c0, #18a8f4 4px, #1290e8 10px, #1090e8 28px, #0c68b8); }
.chev { width: 18px; height: 18px; margin-left: -8px; }
.t12 { width: 12px; height: 12px; }
.ati { width: 16px; height: 12px; background: #e01818; border-radius: 4px 0 0 0; font: italic bold 8px/12px "Liberation Sans", sans-serif; text-align: center; }
.tray time { margin-left: 3px; }
</style>
